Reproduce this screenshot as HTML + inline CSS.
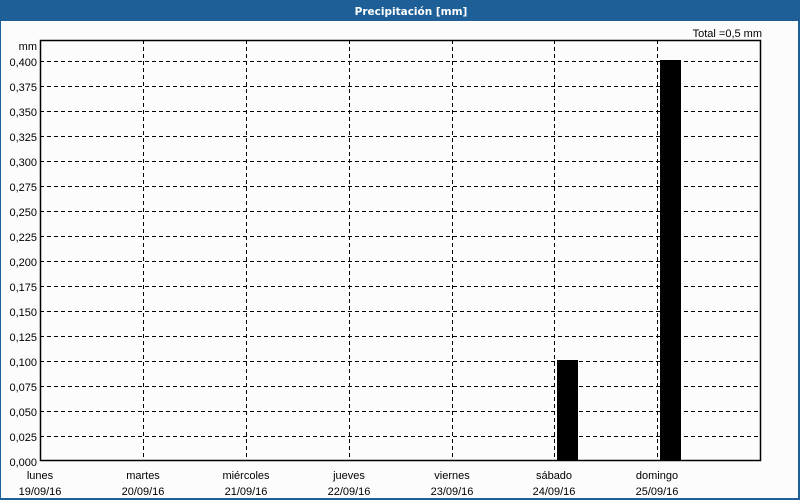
<!DOCTYPE html>
<html><head><style>
html,body{margin:0;padding:0;background:#fff}
svg{display:block}
text{font-family:"Liberation Sans","DejaVu Sans",sans-serif;font-size:11px;fill:#000}
</style></head><body>
<svg width="800" height="500" viewBox="0 0 800 500" xmlns="http://www.w3.org/2000/svg">
<rect x="0" y="0" width="800" height="500" fill="#1d5f96"/>
<rect x="1" y="21" width="797" height="477" fill="#fcfcfc"/>
<text x="411" y="15" text-anchor="middle" style="font-family:'DejaVu Sans',sans-serif;font-weight:bold;fill:#fff;font-size:10.5px">Precipitación [mm]</text>
<text x="762" y="37" text-anchor="end">Total =0,5 mm</text>
<text x="37" y="50" text-anchor="end">mm</text>
<g stroke="#000" stroke-width="1" stroke-dasharray="4,3" shape-rendering="crispEdges">
<line x1="40" y1="61.5" x2="760" y2="61.5"/><line x1="40" y1="86.5" x2="760" y2="86.5"/><line x1="40" y1="111.5" x2="760" y2="111.5"/><line x1="40" y1="136.5" x2="760" y2="136.5"/><line x1="40" y1="161.5" x2="760" y2="161.5"/><line x1="40" y1="186.5" x2="760" y2="186.5"/><line x1="40" y1="211.5" x2="760" y2="211.5"/><line x1="40" y1="236.5" x2="760" y2="236.5"/><line x1="40" y1="261.5" x2="760" y2="261.5"/><line x1="40" y1="286.5" x2="760" y2="286.5"/><line x1="40" y1="311.5" x2="760" y2="311.5"/><line x1="40" y1="336.5" x2="760" y2="336.5"/><line x1="40" y1="361.5" x2="760" y2="361.5"/><line x1="40" y1="386.5" x2="760" y2="386.5"/><line x1="40" y1="411.5" x2="760" y2="411.5"/><line x1="40" y1="436.5" x2="760" y2="436.5"/>
<line x1="143.5" y1="40" x2="143.5" y2="460"/><line x1="246.5" y1="40" x2="246.5" y2="460"/><line x1="349.5" y1="40" x2="349.5" y2="460"/><line x1="452.5" y1="40" x2="452.5" y2="460"/><line x1="554.5" y1="40" x2="554.5" y2="460"/><line x1="657.5" y1="40" x2="657.5" y2="460"/>
</g>
<rect x="557" y="360" width="21" height="100" fill="#000"/>
<rect x="660" y="60" width="21" height="400" fill="#000"/>
<rect x="40.5" y="40.5" width="720" height="420" fill="none" stroke="#000" stroke-width="1.5"/>
<g text-anchor="end">
<text x="37" y="66">0,400</text><text x="37" y="91">0,375</text><text x="37" y="116">0,350</text><text x="37" y="141">0,325</text><text x="37" y="166">0,300</text><text x="37" y="191">0,275</text><text x="37" y="216">0,250</text><text x="37" y="241">0,225</text><text x="37" y="266">0,200</text><text x="37" y="291">0,175</text><text x="37" y="316">0,150</text><text x="37" y="341">0,125</text><text x="37" y="366">0,100</text><text x="37" y="391">0,075</text><text x="37" y="416">0,050</text><text x="37" y="441">0,025</text><text x="37" y="466">0,000</text>
</g>
<g text-anchor="middle">
<text x="40" y="479">lunes</text><text x="40" y="495">19/09/16</text>
<text x="143" y="479">martes</text><text x="143" y="495">20/09/16</text>
<text x="246" y="479">miércoles</text><text x="246" y="495">21/09/16</text>
<text x="349" y="479">jueves</text><text x="349" y="495">22/09/16</text>
<text x="452" y="479">viernes</text><text x="452" y="495">23/09/16</text>
<text x="554" y="479">sábado</text><text x="554" y="495">24/09/16</text>
<text x="657" y="479">domingo</text><text x="657" y="495">25/09/16</text>
</g>
</svg>
</body></html>
